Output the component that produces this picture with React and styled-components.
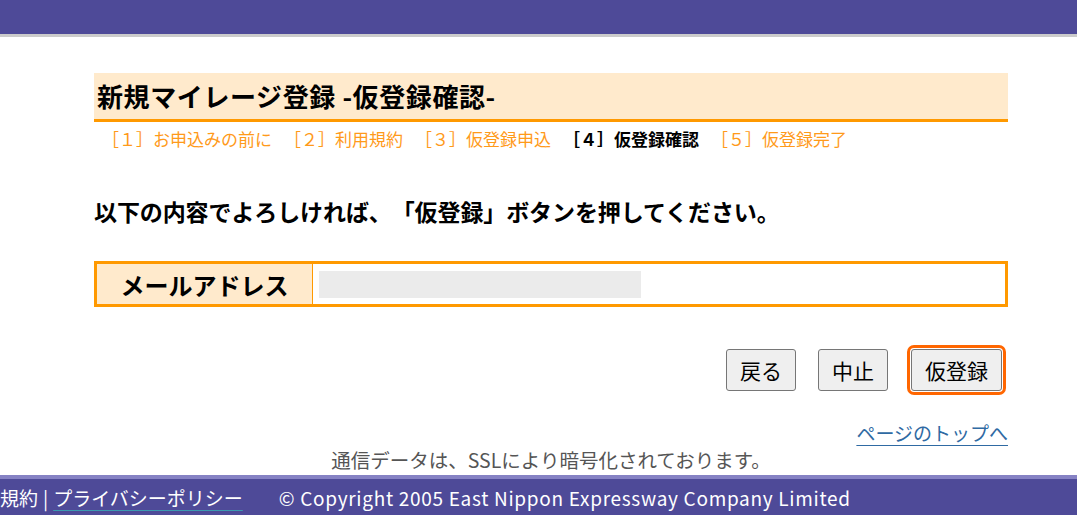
import React from "react";
import styled, { createGlobalStyle } from "styled-components";

const GlobalStyle = createGlobalStyle`
  html, body { margin: 0; padding: 0; background: #fff; }
  body {
    font-family: "Noto Sans CJK JP", "Noto Sans", sans-serif;
    color: #000;
    overflow: hidden;
    text-spacing-trim: space-all;
  }
`;

const Page = styled.div`
  display: flex;
  flex-direction: column;
  min-height: 517px;
  width: 1077px;
`;

const TopBar = styled.header`
  height: 34px;
  background: #4e4a98;
  border-bottom: 3px solid #cbcbcb;
`;

const Main = styled.main`
  width: 914px;
  margin: 36px 0 0 94px;
  display: flex;
  flex-direction: column;
`;

const Title = styled.h1`
  margin: 0;
  height: 46px;
  line-height: 46px;
  padding-left: 3px;
  background: #ffeacc;
  border-bottom: 3px solid #ff9900;
  font-size: 26px;
  letter-spacing: 0.6px;
  font-weight: 700;
  white-space: nowrap;
`;

const Steps = styled.ol`
  list-style: none;
  margin: 4px 0 0;
  padding: 0 0 0 8px;
  display: flex;
  gap: 12px;
  font-size: 17px;
  line-height: 26px;
`;

const Step = styled.li`
  color: ${(p) => (p.$current ? "#000" : "#ff9a1a")};
  font-weight: ${(p) => (p.$current ? 700 : 400)};
  white-space: nowrap;
`;

const Message = styled.p`
  margin: 44px 0 0;
  font-size: 23px;
  letter-spacing: -0.1px;
  line-height: 30px;
  font-weight: 700;
  white-space: nowrap;
`;

const Table = styled.table`
  margin-top: 35px;
  width: 100%;
  border-collapse: collapse;
  border: 3px solid #ff9900;
`;

const Th = styled.th`
  width: 215px;
  height: 40px;
  padding: 0;
  background: #ffeacc;
  border-right: 1px solid #ff9900;
  font-size: 24px;
  font-weight: 700;
  text-align: center;
  white-space: nowrap;
`;

const Td = styled.td`
  padding: 0 6px;
  height: 40px;
`;

const Masked = styled.div`
  width: 322px;
  height: 27px;
  background: #ebebeb;
`;

const Actions = styled.div`
  margin-top: 42px;
  display: flex;
  justify-content: flex-end;
  align-items: center;
  gap: 22px;
  padding-right: 6px;
`;

const Button = styled.button`
  height: 42px;
  padding: 0 13px;
  font-family: "Noto Sans CJK JP", sans-serif;
  font-size: 21px;
  line-height: 1;
  color: #000;
  background: #efefef;
  border: 1px solid #767676;
  border-radius: 3px;
  outline: ${(p) => (p.$focused ? "3px solid #ff6600" : "none")};
  outline-offset: 1px;
  margin-left: ${(p) => (p.$focused ? "1px" : "0")};
`;

const TopLink = styled.a`
  align-self: flex-end;
  margin-top: 30px;
  font-size: 19px;
  line-height: 24px;
  color: #2f6aa3;
  text-decoration: underline;
  text-underline-offset: 4px;
`;

const Secure = styled.p`
  margin: 3px 0 0;
  text-align: center;
  font-size: 19.5px;
  line-height: 24px;
  color: #555;
`;

const Footer = styled.footer`
  margin-top: 3px;
  height: 36px;
  background: #4e4a98;
  border-top: 4px solid #8682c4;
  display: flex;
  align-items: center;
  overflow: hidden;
`;

const FooterRow = styled.div`
  display: flex;
  align-items: center;
  color: #fff;
  font-size: 19px;
  white-space: nowrap;
`;

const FooterLink = styled.a`
  color: #fff;
  text-decoration: underline;
  text-decoration-color: #3a9ab0;
  text-underline-offset: 4px;
`;

const Sep = styled.span`
  margin: 0 5px;
`;

const Copyright = styled.span`
  margin-left: 36px;
  letter-spacing: 0.7px;
`;

export default function App() {
  const steps = [
    "［１］お申込みの前に",
    "［２］利用規約",
    "［３］仮登録申込",
    "［４］仮登録確認",
    "［５］仮登録完了",
  ];
  return (
    <Page>
      <GlobalStyle />
      <TopBar />
      <Main>
        <Title>新規マイレージ登録 -仮登録確認-</Title>
        <Steps>
          {steps.map((s, i) => (
            <Step key={s} $current={i === 3}>
              {s}
            </Step>
          ))}
        </Steps>
        <Message>以下の内容でよろしければ、「仮登録」ボタンを押してください。</Message>
        <Table>
          <tbody>
            <tr>
              <Th>メールアドレス</Th>
              <Td>
                <Masked />
              </Td>
            </tr>
          </tbody>
        </Table>
        <Actions>
          <Button>戻る</Button>
          <Button>中止</Button>
          <Button $focused>仮登録</Button>
        </Actions>
        <TopLink href="#">ページのトップへ</TopLink>
        <Secure>通信データは、SSLにより暗号化されております。</Secure>
      </Main>
      <Footer>
        <FooterRow>
          <span>規約</span>
          <Sep>|</Sep>
          <FooterLink href="#">プライバシーポリシー</FooterLink>
          <Copyright>© Copyright 2005 East Nippon Expressway Company Limited</Copyright>
        </FooterRow>
      </Footer>
    </Page>
  );
}
